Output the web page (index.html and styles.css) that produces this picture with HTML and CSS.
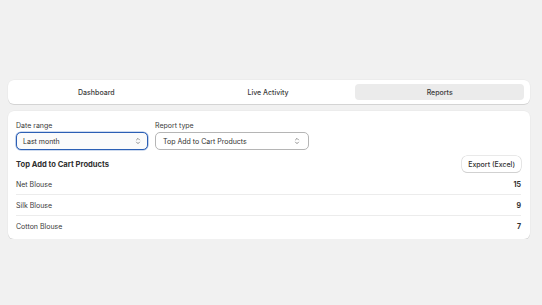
FILE: index.html
```html
<!DOCTYPE html>
<html>
<head>
<meta charset="utf-8">
<link rel="stylesheet" href="styles.css">
</head>
<body>
<div class="page">
  <div class="card tabs">
    <div class="tab">Dashboard</div>
    <div class="tab">Live Activity</div>
    <div class="tab active">Reports</div>
  </div>
  <div class="card report">
    <div class="filters">
      <div class="field">
        <div class="label">Date range</div>
        <div class="select focused date">
          <span>Last month</span>
          <svg class="chev" viewBox="0 0 8 10" width="6" height="8"><path d="M2 3.5 L4 1.5 L6 3.5 M2 6.5 L4 8.5 L6 6.5" fill="none" stroke="#5c5c5c" stroke-width="0.9" stroke-linecap="round" stroke-linejoin="round"/></svg>
        </div>
      </div>
      <div class="field">
        <div class="label">Report type</div>
        <div class="select type">
          <span>Top Add to Cart Products</span>
          <svg class="chev" viewBox="0 0 8 10" width="6" height="8"><path d="M2 3.5 L4 1.5 L6 3.5 M2 6.5 L4 8.5 L6 6.5" fill="none" stroke="#5c5c5c" stroke-width="0.9" stroke-linecap="round" stroke-linejoin="round"/></svg>
        </div>
      </div>
    </div>
    <div class="head">
      <div class="title">Top Add to Cart Products</div>
      <div class="btn">Export (Excel)</div>
    </div>
    <div class="rows">
      <div class="row"><span>Net Blouse</span><b>15</b></div>
      <div class="row"><span>Silk Blouse</span><b>9</b></div>
      <div class="row"><span>Cotton Blouse</span><b>7</b></div>
    </div>
  </div>
</div>
</body>
</html>
```
FILE: styles.css
```css
html, body {
  margin: 0;
  padding: 0;
  background: #f1f1f1;
}
body {
  font-family: Inter, "Noto Sans", "Liberation Sans", sans-serif;
  color: #303030;
  font-size: 7px;
}
.page {
  padding: 80px 12px 0 8px;
  display: flex;
  flex-direction: column;
  gap: 7px;
}
.card {
  background: #fff;
  border-radius: 6px;
  box-shadow: 0 1px 0 rgba(0,0,0,0.10), 0 0 0 0.5px rgba(0,0,0,0.04);
}
.tabs {
  display: grid;
  grid-template-columns: 1fr 1fr 1fr;
  column-gap: 3px;
  padding: 4px 6px 4px 4px;
  height: 16px;
}
.tab {
  display: flex;
  align-items: center;
  justify-content: center;
  border-radius: 4px;
  font-weight: 500;
  color: #3a3a3a;
}
.tab.active {
  background: #ebebeb;
}
.report {
  padding: 10px 9px 3px 8px;
}
.filters {
  display: flex;
  gap: 7px;
}
.field {
  display: flex;
  flex-direction: column;
}
.label {
  line-height: 10px;
  margin-bottom: 1px;
  color: #3a3a3a;
}
.select {
  height: 18px;
  box-sizing: border-box;
  border: 0.6px solid #b5b5b5;
  border-radius: 5px;
  display: flex;
  align-items: center;
  justify-content: space-between;
  padding: 0 8px 0 7px;
}
.select.focused {
  border: 1.5px solid #2c5fb4;
  box-shadow: 0 0 0 0.6px #9cb6e0;
  padding: 0 6px 0 6px;
  background: #fbfbfb;
}
.date { width: 132px; }
.type { width: 154px; }
.head {
  margin-top: 6px;
  height: 16px;
  display: flex;
  align-items: center;
  justify-content: space-between;
}
.title {
  font-weight: 700;
  font-size: 7.6px;
  padding-top: 1px;
}
.btn {
  height: 16px;
  box-sizing: border-box;
  padding: 0 6px;
  display: flex;
  align-items: center;
  border-radius: 5px;
  background: #fff;
  box-shadow: 0 0 0 0.6px #d4d4d4, 0 1px 0 #cfcfcf;
  font-weight: 500;
}
.rows {
  margin-top: 2px;
}
.row {
  height: 20px;
  display: flex;
  align-items: center;
  justify-content: space-between;
  border-bottom: 1px solid #ececec;
  color: #3a3a3a;
}
.row:last-child {
  border-bottom: none;
}
.row b {
  font-weight: 700;
  color: #303030;
}
```
